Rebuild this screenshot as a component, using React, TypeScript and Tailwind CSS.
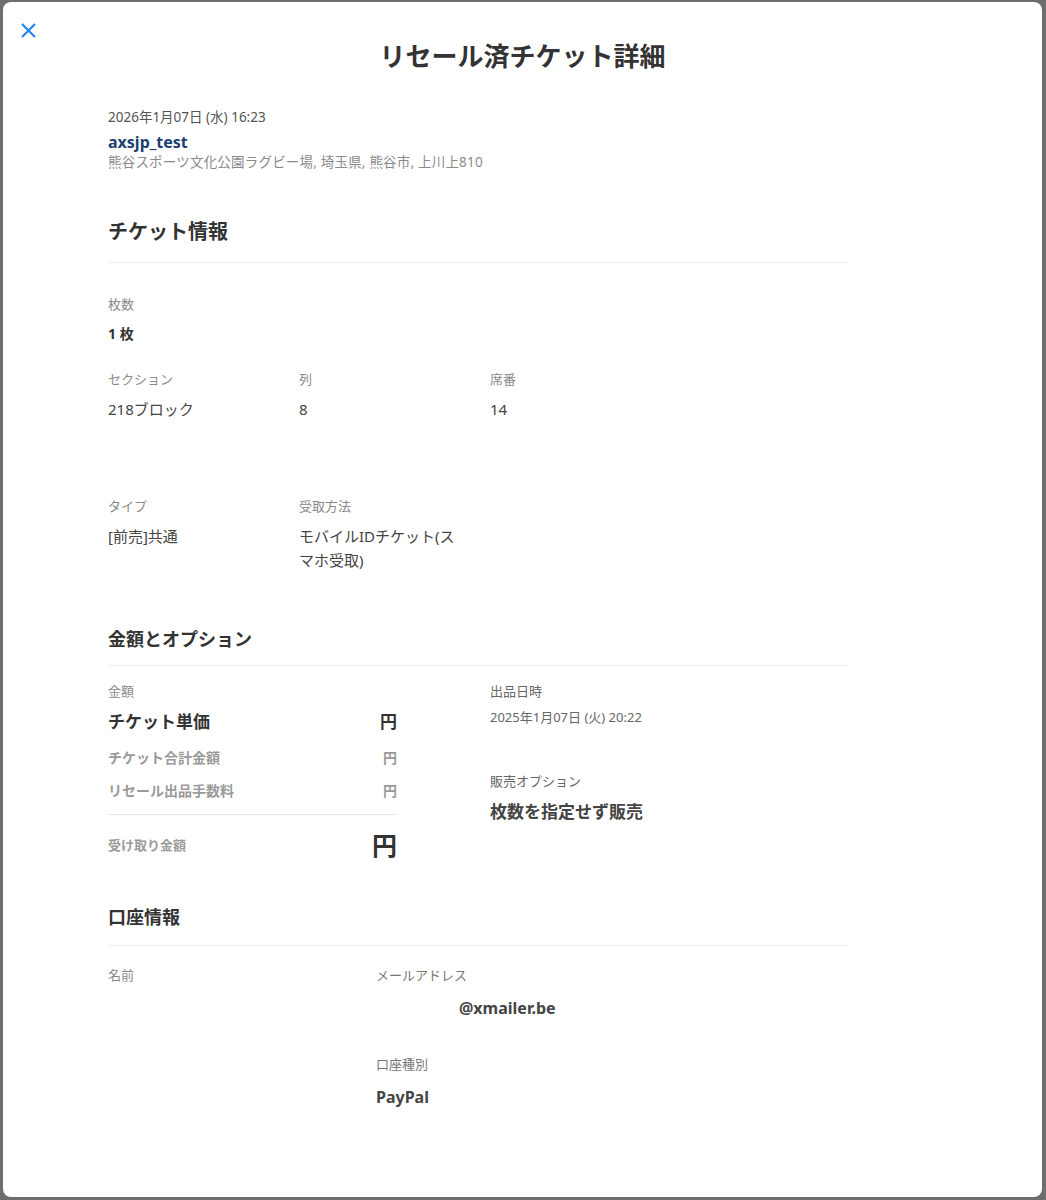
import React from "react";

const font = { fontFamily: '"Noto Sans", "Noto Sans CJK JP", sans-serif' };

function Label({ children }: { children: React.ReactNode }) {
  return <div className="text-[13px] leading-[18px] text-[#8a8a8a]">{children}</div>;
}

function Value({ children }: { children: React.ReactNode }) {
  return <div className="mt-[9px] text-[15px] leading-[24px] text-[#444]">{children}</div>;
}

function SectionTitle({ children, big }: { children: React.ReactNode; big?: boolean }) {
  return (
    <div
      className={
        big
          ? "text-[20px] leading-[28px] font-bold text-[#333]"
          : "text-[18px] leading-[26px] font-bold text-[#333]"
      }
    >
      {children}
    </div>
  );
}

function PriceRow({ label, muted }: { label: string; muted?: boolean }) {
  return (
    <div
      className={
        muted
          ? "flex justify-between text-[14px] leading-[20px] font-bold text-[#9a9a9a]"
          : "flex justify-between text-[17px] leading-[24px] font-bold text-[#333]"
      }
    >
      <span>{label}</span>
      <span>円</span>
    </div>
  );
}

export default function App() {
  return (
    <div className="w-[1046px] h-[1200px] bg-[#6e6e6e] pt-[2px] pl-[3px] pr-[4px] pb-[3px]" style={font}>
      <div className="relative h-full bg-white rounded-lg pt-[36px]">
        <button className="absolute left-[17px] top-[20px] text-[#2288ee]" aria-label="close">
          <svg width="17" height="17" viewBox="0 0 17 17" fill="none" stroke="currentColor" strokeWidth="2.2">
            <path d="M2 2 L15 15 M15 2 L2 15" />
          </svg>
        </button>

        <h1 className="text-center text-[26px] leading-[36px] font-bold text-[#333]">リセール済チケット詳細</h1>

        <div className="pl-[105px] w-[844px]">
          {/* event */}
          <div className="mt-[34px] text-[13.5px] leading-[18px] text-[#555]">2026年1月07日 (水) 16:23</div>
          <div className="mt-[5px] text-[16px] leading-[22px] font-bold text-[#1c3f73]">axsjp_test</div>
          <div className="text-[13.5px] leading-[18px] text-[#8a8a8a] tracking-[0.2px]">熊谷スポーツ文化公園ラグビー場, 埼玉県, 熊谷市, 上川上810</div>

          {/* ticket */}
          <div className="mt-[47px]">
            <SectionTitle big>チケット情報</SectionTitle>
          </div>
          <div className="mt-[16px] border-t border-[#ececec]" />

          <div className="mt-[32px]">
            <Label>枚数</Label>
            <div className="mt-[11px] text-[14px] leading-[20px] font-bold text-[#333]">1 枚</div>
          </div>

          <div className="mt-[26px] grid grid-cols-[191px_191px_191px]">
            <div>
              <Label>セクション</Label>
              <Value>218ブロック</Value>
            </div>
            <div>
              <Label>列</Label>
              <Value>8</Value>
            </div>
            <div>
              <Label>席番</Label>
              <Value>14</Value>
            </div>
          </div>

          <div className="mt-[76px] grid grid-cols-[191px_191px_191px]">
            <div>
              <Label>タイプ</Label>
              <Value>[前売]共通</Value>
            </div>
            <div className="pr-[24px]">
              <Label>受取方法</Label>
              <Value>モバイルIDチケット(スマホ受取)</Value>
            </div>
          </div>

          {/* price */}
          <div className="mt-[54px]">
            <SectionTitle>金額とオプション</SectionTitle>
          </div>
          <div className="mt-[13px] border-t border-[#ececec]" />

          <div className="mt-[16px] flex">
            <div className="w-[289px]">
              <Label>金額</Label>
              <div className="mt-[10px]">
                <PriceRow label="チケット単価" />
              </div>
              <div className="mt-[14px]">
                <PriceRow label="チケット合計金額" muted />
              </div>
              <div className="mt-[13px]">
                <PriceRow label="リセール出品手数料" muted />
              </div>
              <div className="mt-[13px] border-t border-[#e6e6e6]" />
              <div className="mt-[14px] flex items-center justify-between">
                <span className="text-[13px] leading-[18px] font-bold text-[#9a9a9a]">受け取り金額</span>
                <span className="text-[25px] leading-[32px] font-bold text-[#333]">円</span>
              </div>
            </div>
            <div className="ml-[93px]">
              <div className="text-[13px] leading-[18px] text-[#666]">出品日時</div>
              <div className="mt-[8px] text-[13px] leading-[18px] text-[#666]">2025年1月07日 (火) 20:22</div>
              <div className="mt-[46px] text-[13px] leading-[18px] text-[#666]">販売オプション</div>
              <div className="mt-[10px] text-[17px] leading-[24px] font-bold text-[#444]">枚数を指定せず販売</div>
            </div>
          </div>

          {/* account */}
          <div className="mt-[43px]">
            <SectionTitle>口座情報</SectionTitle>
          </div>
          <div className="mt-[15px] border-t border-[#ececec]" />

          <div className="mt-[20px] flex">
            <div className="w-[268px]">
              <Label>名前</Label>
            </div>
            <div>
              <div className="text-[13px] leading-[18px] text-[#777]">メールアドレス</div>
              <div className="mt-[13px] pl-[83px] text-[16px] leading-[22px] font-bold text-[#444]">@xmailer.be</div>
              <div className="mt-[36px] text-[13px] leading-[18px] text-[#777]">口座種別</div>
              <div className="mt-[13px] text-[16px] leading-[22px] font-bold text-[#444]">PayPal</div>
            </div>
          </div>
        </div>
      </div>
    </div>
  );
}
